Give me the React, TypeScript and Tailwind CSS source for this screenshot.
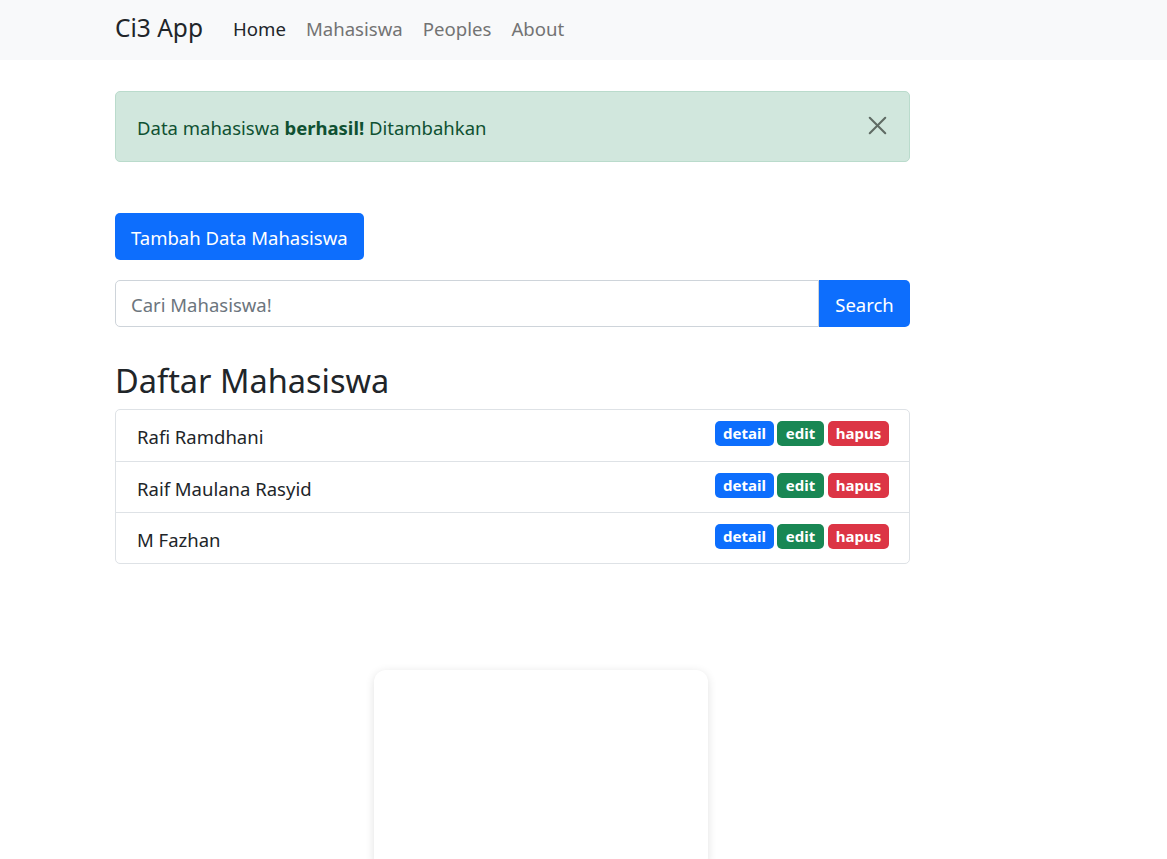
import { X } from "lucide-react";

const students = ["Rafi Ramdhani", "Raif Maulana Rasyid", "M Fazhan"];

const navLinks = [
  { label: "Home", active: true },
  { label: "Mahasiswa", active: false },
  { label: "Peoples", active: false },
  { label: "About", active: false },
];

const App = () => {
  return (
    <div className="min-h-[859px] bg-white text-[18.5px] text-[#212529] font-['Segoe_UI','Noto_Sans',sans-serif] overflow-hidden">
      {/* navbar */}
      <nav className="h-[60px] bg-[#f8f9fa]">
        <div className="ml-[115px] flex h-full items-center pb-[3px]">
          <span className="text-[24.5px] text-[#212529] mr-[20px]">Ci3 App</span>
          <div className="flex text-[18.6px]">
            {navLinks.map((item) => (
              <a
                key={item.label}
                href="#"
                className={
                  "px-[10px] " +
                  (item.active ? "text-[#212529]" : "text-[#737373]")
                }
              >
                {item.label}
              </a>
            ))}
          </div>
        </div>
      </nav>

      <main className="ml-[115px] w-[795px]">
        {/* alert */}
        <div className="mt-[31px] flex h-[71px] items-center justify-between rounded-[5px] border border-[#badbcc] bg-[#d1e7dd] pl-[21px] pr-[16px] pt-[3px] text-[#0f5132]">
          <span>
            Data mahasiswa <b className="font-bold">berhasil!</b> Ditambahkan
          </span>
          <X size={31} strokeWidth={1.6} className="-mt-[5px] text-[#5f6b64]" />
        </div>

        <button className="mt-[51px] h-[47px] rounded-[5px] bg-[#0d6efd] px-[16px] pt-[3px] text-white">
          Tambah Data Mahasiswa
        </button>

        {/* search */}
        <div className="mt-[20px] flex h-[47px]">
          <input
            className="flex-1 rounded-l-[5px] border border-[#ced4da] px-[15px] pt-[3px] text-[#212529] placeholder:text-[#6c757d] outline-none"
            placeholder="Cari Mahasiswa!"
          />
          <button className="w-[91px] rounded-r-[5px] bg-[#0d6efd] pt-[3px] text-white">
            Search
          </button>
        </div>

        <h3 className="mt-[33px] text-[32.5px] leading-[42px]">Daftar Mahasiswa</h3>

        <ul className="mt-[7px] rounded-[5px] border border-[#dee2e6]">
          {students.map((name, i) => (
            <li
              key={name}
              className={
                "flex h-[51px] items-center justify-between pl-[21px] pr-[20px] " +
                (i > 0 ? "border-t border-[#dee2e6]" : "")
              }
            >
              <span className="pt-[3px]">{name}</span>
              <div className="mb-[4px] flex gap-[3px] text-[15px] font-bold text-white">
                <span className="flex h-[25px] w-[59px] items-center justify-center rounded-[5px] bg-[#0d6efd]">detail</span>
                <span className="flex h-[25px] w-[47px] items-center justify-center rounded-[5px] bg-[#198754]">edit</span>
                <span className="ml-[1px] flex h-[25px] w-[61px] items-center justify-center rounded-[5px] bg-[#dc3545]">hapus</span>
              </div>
            </li>
          ))}
        </ul>
      </main>

      {/* blank card at bottom */}
      <div className="mt-[106px] ml-[374px] h-[200px] w-[334px] rounded-[12px] bg-white shadow-[0_2px_10px_rgba(0,0,0,0.12)]" />
    </div>
  );
};

export default App;
